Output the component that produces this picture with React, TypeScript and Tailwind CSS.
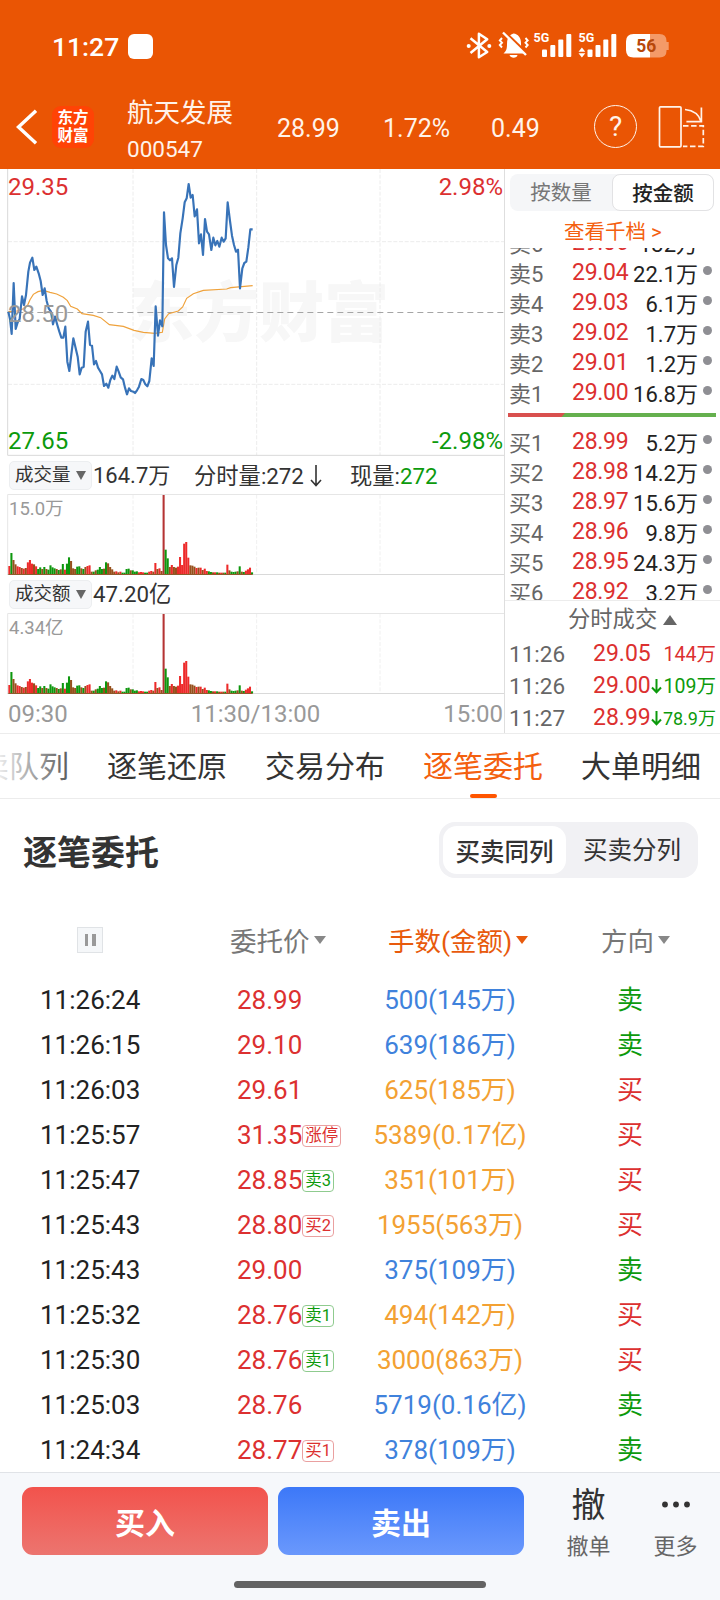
import * as React from "react";
import { clsx } from "clsx";

type Side = "buy" | "sell";

interface Level {
  label: string;
  price: string;
  amount: string;
}

interface Order {
  time: string;
  price: string;
  tag?: string;
  tagSide?: Side;
  lots: string;
  lotsColor: "blue" | "orange";
  side: Side;
}

const asks: Level[] = [
  { label: "卖6", price: "29.06", amount: "132万" },
  { label: "卖5", price: "29.04", amount: "22.1万" },
  { label: "卖4", price: "29.03", amount: "6.1万" },
  { label: "卖3", price: "29.02", amount: "1.7万" },
  { label: "卖2", price: "29.01", amount: "1.2万" },
  { label: "卖1", price: "29.00", amount: "16.8万" },
];

const bids: Level[] = [
  { label: "买1", price: "28.99", amount: "5.2万" },
  { label: "买2", price: "28.98", amount: "14.2万" },
  { label: "买3", price: "28.97", amount: "15.6万" },
  { label: "买4", price: "28.96", amount: "9.8万" },
  { label: "买5", price: "28.95", amount: "24.3万" },
  { label: "买6", price: "28.92", amount: "3.2万" },
];

const orders: Order[] = [
  { time: "11:26:24", price: "28.99", lots: "500(145万)", lotsColor: "blue", side: "sell" },
  { time: "11:26:15", price: "29.10", lots: "639(186万)", lotsColor: "blue", side: "sell" },
  { time: "11:26:03", price: "29.61", lots: "625(185万)", lotsColor: "orange", side: "buy" },
  { time: "11:25:57", price: "31.35", tag: "涨停", tagSide: "buy", lots: "5389(0.17亿)", lotsColor: "orange", side: "buy" },
  { time: "11:25:47", price: "28.85", tag: "卖3", tagSide: "sell", lots: "351(101万)", lotsColor: "orange", side: "buy" },
  { time: "11:25:43", price: "28.80", tag: "买2", tagSide: "buy", lots: "1955(563万)", lotsColor: "orange", side: "buy" },
  { time: "11:25:43", price: "29.00", lots: "375(109万)", lotsColor: "blue", side: "sell" },
  { time: "11:25:32", price: "28.76", tag: "卖1", tagSide: "sell", lots: "494(142万)", lotsColor: "orange", side: "buy" },
  { time: "11:25:30", price: "28.76", tag: "卖1", tagSide: "sell", lots: "3000(863万)", lotsColor: "orange", side: "buy" },
  { time: "11:25:03", price: "28.76", lots: "5719(0.16亿)", lotsColor: "blue", side: "sell" },
  { time: "11:24:34", price: "28.77", tag: "买1", tagSide: "buy", lots: "378(109万)", lotsColor: "blue", side: "sell" },
];

// Chart coordinates are in thirds of a pixel
const pricePoints =
  "25,440 30,462 35,507 41,354 47,492 53,472 59,462 66,394 72,420 78,390 85,320 90,293 97,278 103,315 109,305 116,325 122,348 128,390 134,370 140,408 146,430 153,440 159,478 165,455 172,480 178,500 184,518 190,518 196,485 202,590 208,618 214,568 220,520 226,545 233,575 239,628 245,608 251,606 257,500 264,470 270,540 276,542 282,598 288,588 294,608 300,618 306,628 312,663 319,656 325,668 331,645 337,632 343,642 350,605 356,620 362,637 369,643 375,668 381,688 387,670 393,678 400,680 405,684 411,676 417,665 424,642 430,645 436,658 442,664 448,648 455,580 461,603 467,424 474,512 480,466 487,484 492,142 498,240 504,280 510,286 516,280 522,366 529,300 535,278 541,205 548,160 554,112 560,100 566,57 572,98 578,90 584,154 591,133 597,235 603,208 609,270 615,162 621,200 627,208 634,255 640,218 646,241 652,228 658,245 665,218 671,230 677,220 683,112 690,168 696,212 702,240 708,260 714,254 720,370 727,310 733,294 739,290 745,248 751,193 758,193";

const averagePoints =
  "25,440 50,438 75,430 84,418 90,404 100,388 114,380 130,376 150,382 170,387 190,397 202,407 212,424 232,432 246,446 280,451 302,458 328,479 370,484 402,496 430,502 465,505 487,502 494,462 506,446 535,438 548,426 560,400 580,386 610,376 680,372 692,368 758,362";

// height and colour of one bar per minute
const volumes =
  "25r 64g 43m 30m 24r 22r 19m 17r 19m 36r 43r 32r 30m 24r 16g 21g 16m 22g 16m 14g 27g 21g 18g 16m 13g 15m 31g 14r 32g 51g 40m 18m 16m 23g 24g 18m 16g 22m 25r 27r 8m 8g 12m 14g 22g 16g 17m 36g 33m 22m 15m 8m 9r 6m 8r 5g 5g 16g 17g 12m 12g 8g 9g 6r 7r 6r 5g 5g 8r 10r 8m 34r 16m 18r 10m 238s 74g 48g 22m 28r 22m 20m 23r 52r 28r 92r 97r 50r 27m 26m 23m 19r 20m 20r 13m 17r 10r 9g 7g 6m 6r 6g 5m 5r 5m 5g 29r 12m 8g 7g 8g 9m 24g 8m 7g 11r 15r 20r 6g"
    .split(" ")
    .map((v) => ({ h: parseInt(v), c: v.slice(-1) }));

const barColor: Record<string, string> = {
  r: "#ed2a2a",
  g: "#0d970d",
  m: "#96501c",
  s: "#b53434",
};

function StatusIcons() {
  return (
    <svg width="206" height="30" viewBox="465 31 206 30" fill="none" stroke="#fff">
      <path
        d="M470.500 38.300l16.700 13.700-8.300 5.300V33.700l8.300 5.600-16.700 13.700"
        strokeWidth="2.500"
        strokeLinejoin="round"
      />
      <circle cx="468.700" cy="46" r="2" fill="#fff" stroke="none" />
      <circle cx="489.300" cy="46" r="2" fill="#fff" stroke="none" />
      <path
        d="M503.500 53.500c3-2.800 3.500-5 3.500-9.500 0-6 2.500-9.500 6.500-10.500 4.500.5 7.500 4 7.500 9.500 0 5 .5 7.500 3 10.500z"
        fill="#fff"
        stroke="none"
      />
      <path d="M509.500 55h8c-.5 3.500-7 3.500-8 0z" fill="#fff" stroke="none" />
      <path d="M505 32.500l23 22" stroke="#ea5504" strokeWidth="3" />
      <path d="M503 32.500l23 22.500" strokeWidth="2.400" />
      <path d="M502 38l-2.200 2.500 2.200 2.200-2.200 2.300 2.200 2.500M525.500 38l2.200 2.500-2.200 2.200 2.200 2.300-2.200 2.500" strokeWidth="1.900" />
      <g fill="#fff" stroke="none" fontFamily="Roboto" fontWeight="700" fontSize="12.500">
        <text x="533.500" y="41.500">5G</text>
        <text x="578.500" y="41.500">5G</text>
      </g>
      <g fill="#fff" stroke="none">
        <rect x="542" y="49.500" width="5" height="7.500" rx="1" />
        <rect x="550.300" y="45" width="5" height="12" rx="1" />
        <rect x="558.300" y="39.500" width="5" height="17.500" rx="1" />
        <rect x="566.300" y="34" width="5" height="23" rx="1" />
        <rect x="587.500" y="49.500" width="5" height="7.500" rx="1" />
        <rect x="595.500" y="45" width="5" height="12" rx="1" />
        <rect x="603.300" y="39.500" width="5" height="17.500" rx="1" />
        <rect x="611.300" y="34" width="5" height="23" rx="1" />
        <path d="M578.500 51.800l3.400-4.300 3.400 4.300zM578.500 53.200l3.400 4.300 3.400-4.300z" />
        <path d="M650 34h9.500q7 0 7 7v1h2.200v8h-2.200v1q0 6.500-7 6.500H650z" fill="#f49a68" />
        <path d="M650 34h-16.500q-7.500 0-7.500 7.500v8.500q0 7.500 7.500 7.500H650z" />
        <text x="636.200" y="51.800" fontFamily="Roboto" fontWeight="700" fontSize="17.500" fill="#b8480a">
          56
        </text>
      </g>
    </svg>
  );
}

function Header() {
  return (
    <header className="h-[169px] bg-[#ea5504] text-white">
      <div className="flex h-[92px] items-center pl-[52px]">
        <span className="w-[76px] pt-0.5 text-[26.500px] font-medium leading-8">11:27</span>
        <span className="size-[25px] rounded-[6px] bg-white" />
        <div className="ml-[312px]">
          <StatusIcons />
        </div>
      </div>
      <div className="flex h-[69px] items-center text-[25px] leading-8 text-[#fff3ea]">
        <svg className="ml-4 mr-[14px]" width="22" height="36" viewBox="0 0 22 36" fill="none">
          <path d="M20 1.700L2.500 18 20 34.300" stroke="#fff" strokeWidth="3.400" />
        </svg>
        <div className="flex size-[42px] flex-col items-center justify-center rounded-[9px] bg-[#ff4305] text-[15.500px] font-bold leading-[18px] text-white">
          <span>东方</span>
          <span>财富</span>
        </div>
        <div className="ml-[33px] w-[150px] pt-2">
          <div className="text-[26.500px] leading-9">航天发展</div>
          <div className="text-[22.500px] leading-9">000547</div>
        </div>
        <span className="w-[106px] pt-1">28.99</span>
        <span className="w-[108px] pt-1">1.72%</span>
        <span className="w-[103px] pt-1">0.49</span>
        <span className="flex size-[43px] items-center justify-center rounded-full border-[1.500px] border-[#fff3ea] text-[28px]">
          ?
        </span>
        <svg className="ml-[21px]" width="47" height="43" viewBox="658 105 47 43" fill="none" stroke="#fff3ea" strokeWidth="1.700">
          <rect x="659.500" y="106.800" width="21.500" height="40" rx="1" />
          <path d="M685 109.500c9 1 14 4.500 16 12M701.400 107.500v14.200h-15" />
          <path d="M683 125.800h20.300v20.500H683" strokeDasharray="5.500 2.600" />
        </svg>
      </div>
    </header>
  );
}

function PriceChart() {
  return (
    <div className="relative h-[287px]">
      <div className="absolute left-[129px] top-[105px] text-[65px] font-black leading-[80px] text-[#f7f7f7]">
        东方财富
      </div>
      <svg className="relative block" width="504" height="287" viewBox="0 12 1512 861" fill="none">
        <g stroke="#ececec" strokeWidth="3" strokeDasharray="12 5">
          <path d="M399 12V870M770 12V870M1140 12V870M24 230H1512M24 658H1512" />
        </g>
        <path d="M23 12V871H1512" stroke="#d9d9d9" strokeWidth="3" />
        <path d="M22 442.500H1512" stroke="#a5a5a5" strokeWidth="3" strokeDasharray="18 12" />
        <polyline points={averagePoints} stroke="#efa23c" strokeWidth="3.500" />
        <polyline points={pricePoints} stroke="#3873b8" strokeWidth="6.500" strokeLinejoin="round" />
      </svg>
      <div className="absolute inset-y-0 left-2 right-0 text-[24px] leading-8">
        <span className="absolute left-0 top-0.5 text-[#dc3030]">29.35</span>
        <span className="absolute right-px top-0.5 text-[#dc3030]">2.98%</span>
        <span className="absolute left-0 top-[129px] text-[#999]">28.50</span>
        <span className="absolute -bottom-px left-0 text-[#0c9a0c]">27.65</span>
        <span className="absolute -bottom-px right-px text-[#0c9a0c]">-2.98%</span>
      </div>
    </div>
  );
}

function VolumeChart({ max }: { max: string }) {
  return (
    <div className="relative h-[81px]">
      <svg className="block" width="504" height="81" viewBox="0 132 1512 243">
        <path d="M399 134V372M770 134V372M1140 134V372" stroke="#f0f0f0" strokeWidth="3" strokeDasharray="12 5" />
        <path d="M23 374V133.500H1512" fill="none" stroke="#e6e6e6" strokeWidth="3" />
        <path d="M22 373.500H1512" stroke="#d9d9d9" strokeWidth="3" />
        {volumes.map((v, i) => (
          <rect key={i} x={25 + i * 6.17} y={373 - v.h} width="6.170" height={v.h} fill={barColor[v.c]} />
        ))}
        <path d="M25 373.500H758" stroke="#8f5a2c" strokeWidth="3" />
      </svg>
      <span className="absolute left-[9px] top-[3px] text-[18.500px] leading-6 text-[#999]">{max}</span>
    </div>
  );
}

function IndicatorPicker({ children }: { children: React.ReactNode }) {
  return (
    <span className="ml-[9px] flex h-[29px] w-[83px] items-center justify-between rounded-[5px] border border-[#eceef0] bg-[#f6f7f9] pl-[5px] pr-[5px] text-[18.500px]">
      {children}
      <svg width="10" height="9" viewBox="0 0 10 9">
        <path d="M0 0h10L5 9z" fill="#666" />
      </svg>
    </span>
  );
}

function Charts() {
  return (
    <div className="w-[505px] border-r border-[#dedede]">
      <PriceChart />
      <div className="flex h-[38px] items-center text-[22.300px] leading-8 text-[#333]">
        <IndicatorPicker>成交量</IndicatorPicker>
        <span className="ml-px w-[101px] pt-0.5 text-[22px]">164.7万</span>
        <span className="flex w-[156px] items-center pt-0.5">
          分时量:272
          <svg className="ml-[6px]" width="12" height="22" viewBox="0 0 12 22" fill="none" stroke="#333" strokeWidth="1.600">
            <path d="M6 0v20M1 15l5 5.500 5-5.500" />
          </svg>
        </span>
        <span className="pt-0.5">
          现量:<span className="text-[#0c9a0c]">272</span>
        </span>
      </div>
      <VolumeChart max="15.0万" />
      <div className="flex h-[38px] items-center text-[22.300px] leading-8 text-[#333]">
        <IndicatorPicker>成交额</IndicatorPicker>
        <span className="ml-px">47.20亿</span>
      </div>
      <VolumeChart max="4.34亿" />
      <div className="flex h-[39px] items-center justify-between pl-2 pr-px text-[24px] leading-8 text-[#999]">
        <span>09:30</span>
        <span>11:30/13:00</span>
        <span>15:00</span>
      </div>
    </div>
  );
}

function LevelRow({ level }: { level: Level }) {
  return (
    <div className="flex h-[30px] shrink-0 items-center pl-1 text-[22px] leading-[30px]">
      <span className="w-[63px] pt-[7px] text-[#666]">{level.label}</span>
      <span className="w-[56px] pt-1 text-[23px] tracking-[-0.300px] text-[#dc3030]">{level.price}</span>
      <span className="-ml-2.5 w-[80px] pt-[7px] text-right text-[#222]">{level.amount}</span>
      <span className="mb-0.5 ml-[5px] size-[9px] rounded-full bg-[#8f8f94]" />
    </div>
  );
}

function DownArrow() {
  return (
    <svg width="11" height="15" viewBox="0 0 11 15" fill="none" stroke="#0c9a0c" strokeWidth="2">
      <path d="M5.500 0v13M1 8.500l4.500 4.700L10 8.500" />
    </svg>
  );
}

function OrderBook() {
  return (
    <div className="w-[215px]">
      <div className="ml-[5px] mt-[5px] flex h-[37px] w-[204px] rounded-lg bg-[#f5f6f8] text-[20.500px] leading-[39px]">
        <span className="w-[102px] text-center text-[#777]">按数量</span>
        <span className="w-[102px] rounded-lg border border-[#e2e2e4] bg-white text-center font-medium leading-[38px] text-[#222]">
          按金额
        </span>
      </div>
      <div className="h-[37px] pl-[59px] text-[20.500px] leading-[42px] text-[#f4600f]">查看千档 &gt;</div>
      <div className="flex h-[165px] flex-col justify-end overflow-hidden pb-[7px]">
        {asks.map((l) => (
          <LevelRow key={l.label} level={l} />
        ))}
      </div>
      <div className="ml-[3px] flex h-1 w-[208px] bg-[#65b04e]">
        <div className="w-[57px] bg-[#d9504e] [clip-path:polygon(0_0,100%_0,94%_100%,0_100%)]" />
      </div>
      <div className="h-[184px] overflow-hidden border-b border-[#ececec] pt-2">
        {bids.map((l) => (
          <LevelRow key={l.label} level={l} />
        ))}
      </div>
      <div className="flex h-[37px] items-center gap-1.5 pl-[63px] text-[22.300px] text-[#666]">
        分时成交
        <svg width="14" height="10" viewBox="0 0 14 10">
          <path d="M0 10h14L7 0z" fill="#666" />
        </svg>
      </div>
      <div className="text-[22.500px] leading-8">
        <div className="flex h-8 items-center pl-1 pr-1">
          <span className="w-[84px] text-[#666]">11:26</span>
          <span className="text-[23px] text-[#dc3030]">29.05</span>
          <span className="ml-auto pt-0.5 text-[19.500px] text-[#dc3030]">144万</span>
        </div>
        <div className="flex h-8 items-center pl-1 pr-1">
          <span className="w-[84px] text-[#666]">11:26</span>
          <span className="text-[23px] text-[#dc3030]">29.00</span>
          <DownArrow />
          <span className="ml-auto pt-0.5 text-[19.500px] text-[#0c9a0c]">109万</span>
        </div>
        <div className="flex h-8 items-center pl-1 pr-1">
          <span className="w-[84px] text-[#666]">11:27</span>
          <span className="text-[23px] text-[#dc3030]">28.99</span>
          <DownArrow />
          <span className="ml-auto pt-0.5 text-[18px] text-[#0c9a0c]">78.9万</span>
        </div>
      </div>
    </div>
  );
}

function Tabs() {
  return (
    <nav className="relative h-[66px] overflow-hidden border-y border-[#ececec]">
      <div className="-ml-[51px] flex h-full w-max gap-[38px] text-[30px] leading-[66px] text-[#333]">
        <span>买卖队列</span>
        <span>逐笔还原</span>
        <span>交易分布</span>
        <span className="relative text-[#f4600f]">
          逐笔委托
          <i className="absolute bottom-0 left-[47px] h-1 w-[27px] rounded-sm bg-[#ff5500]" />
        </span>
        <span>大单明细</span>
      </div>
      <div className="absolute inset-y-0 left-0 w-[88px] bg-linear-to-r from-white/90 to-white/0" />
    </nav>
  );
}

function Caret({ className }: { className?: string }) {
  return (
    <svg className={clsx("mb-1 ml-1", className)} width="12" height="8" viewBox="0 0 12 8" fill="currentColor">
      <path d="M0 0h12L6 8z" />
    </svg>
  );
}

function OrderTable() {
  return (
    <section className="h-[673px] overflow-hidden">
      <div className="flex h-[102px] items-center justify-between pl-[23px] pr-[22px]">
        <h1 className="pt-1.5 text-[34px] font-bold leading-10 text-[#333]">逐笔委托</h1>
        <div className="flex h-[56px] w-[259px] items-center rounded-2xl bg-[#f1f1f4] p-1 text-[24.500px] text-[#333]">
          <span className="h-12 w-[123px] rounded-[14px] bg-white text-center font-medium leading-[53px]">买卖同列</span>
          <span className="ml-1 w-[124px] pt-[3px] text-center">买卖分列</span>
        </div>
      </div>
      <div className="flex h-[77px] items-center pt-1 text-[26.500px] leading-9 text-[#777]">
        <div className="mb-1 ml-[77px] flex h-[26px] w-[26px] items-center justify-center gap-[4px] border border-[#e0e3e6] bg-[#f5f7f9]">
          <i className="h-3 w-[3.500px] bg-[#999]" />
          <i className="h-3 w-[3.500px] bg-[#999]" />
        </div>
        <div className="ml-[127px] flex w-[158px] items-center">
          委托价
          <Caret className="text-[#888]" />
        </div>
        <div className="flex w-[213px] items-center text-[#e85a0c]">
          手数(金额)
          <Caret />
        </div>
        <div className="flex items-center">
          方向
          <Caret className="text-[#888]" />
        </div>
      </div>
      {orders.map((o, i) => (
        <div key={i} className="flex h-[45px] items-center text-[26px] leading-[45px]">
          <span className="w-[237px] pl-10 text-[#222]">{o.time}</span>
          <span className="flex w-[120px] items-center text-[#dc3030]">
            {o.price}
            {o.tag && (
              <span
                className={clsx(
                  "rounded border px-[2px] text-[16.500px] leading-5",
                  o.tagSide === "sell" ? "border-[#8fcb8f] text-[#0c9a0c]" : "border-[#eaa0a0] text-[#dc3030]",
                )}
              >
                {o.tag}
              </span>
            )}
          </span>
          <span className={clsx("w-[186px] text-center", o.lotsColor === "blue" ? "text-[#3f82dc]" : "text-[#f3a133]")}>
            {o.lots}
          </span>
          <span className={clsx("w-[174px] text-center", o.side === "sell" ? "text-[#0c9a0c]" : "text-[#dc3030]")}>
            {o.side === "sell" ? "卖" : "买"}
          </span>
        </div>
      ))}
    </section>
  );
}

function ActionBar() {
  return (
    <footer className="flex h-[128px] flex-col border-t border-[#e0e3e7] bg-[#f6f8fb]">
      <div className="flex pl-[22px] pt-[14px] text-[30px] text-white">
        <button className="h-[68px] w-[246px] rounded-[11px] bg-linear-to-b from-[#f2524c] to-[#ec746f] pt-1 font-bold">
          买入
        </button>
        <button className="ml-[10px] h-[68px] w-[246px] rounded-[11px] bg-linear-to-b from-[#3c78f8] to-[#6a98fc] pt-1 font-bold">
          卖出
        </button>
        <div className="ml-[21px] flex w-[87px] flex-col items-center text-[#333]">
          <span className="text-[34px] leading-[37px]">撤</span>
          <span className="mt-[7px] text-[22px] leading-8 text-[#666]">撤单</span>
        </div>
        <div className="flex w-[87px] flex-col items-center">
          <svg width="30" height="37" viewBox="0 0 30 37" fill="#333">
            <circle cx="4" cy="17.500" r="2.900" />
            <circle cx="15" cy="17.500" r="2.900" />
            <circle cx="26" cy="17.500" r="2.900" />
          </svg>
          <span className="mt-[7px] text-[22px] leading-8 text-[#666]">更多</span>
        </div>
      </div>
      <div className="mx-auto mt-[18px] h-[7px] w-[252px] rounded-full bg-[#636363]" />
    </footer>
  );
}

export default function App() {
  return (
    <div className="h-[1600px] w-[720px] overflow-hidden bg-white font-[Roboto,'Noto_Sans_CJK_SC',sans-serif]">
      <Header />
      <div className="flex h-[564px]">
        <Charts />
        <OrderBook />
      </div>
      <Tabs />
      <OrderTable />
      <ActionBar />
    </div>
  );
}
